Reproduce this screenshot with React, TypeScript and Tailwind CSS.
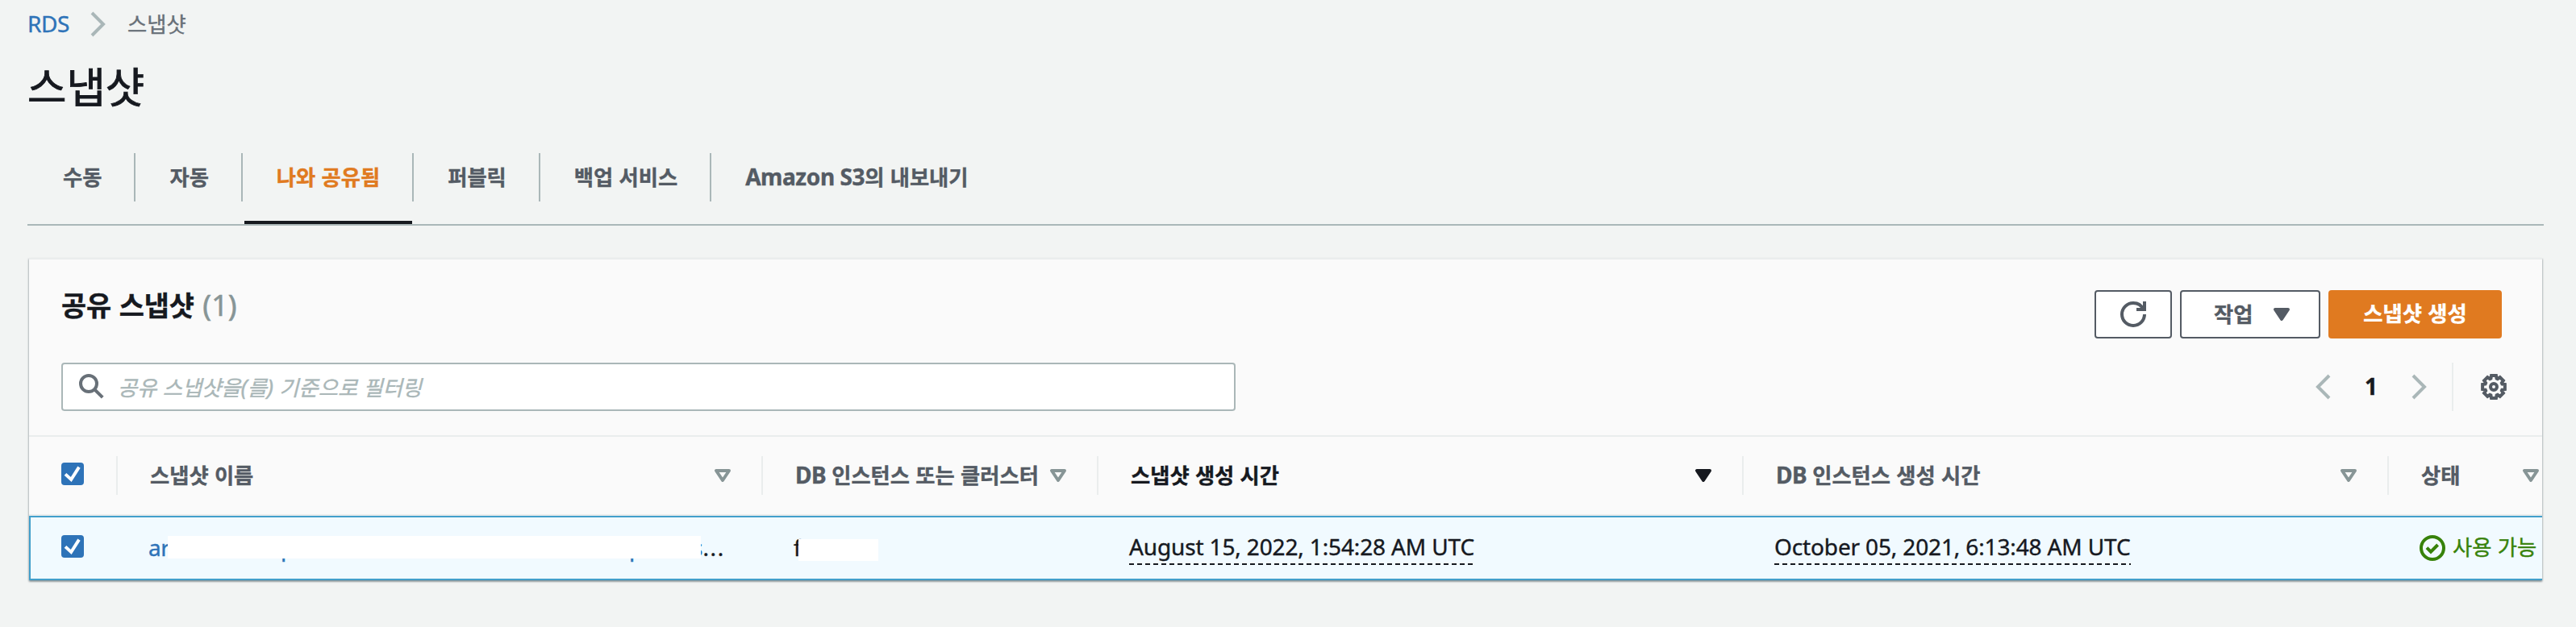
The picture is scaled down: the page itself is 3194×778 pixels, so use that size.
import React from 'react';

// Latin glyphs render at the inherited size, Hangul runs are slightly smaller to keep both optically even
const Mixed: React.FC<{ text: string }> = ({ text }) => (
  <>
    {text.split(/([가-힣]+)/).filter(Boolean).map((part, i) => (
      /[가-힣]/.test(part)
        ? <span key={i} className="text-[0.94em]">{part}</span>
        : <span key={i} className={/[A-Z]/.test(part) ? 'tracking-[-0.4px]' : ''}>{part}</span>
    ))}
  </>
);

const Chevron: React.FC<{ left?: boolean }> = ({ left }) => (
  <svg viewBox="0 0 16 16" className="size-8 shrink-0" fill="none" stroke="#aab7b8" strokeWidth="2">
    <path d={left ? 'M12 1L5 8l7 7' : 'M4 1l7 7-7 7'} />
  </svg>
);

const Caret: React.FC<{ filled?: boolean; className: string }> = ({ filled, className }) => (
  <svg viewBox="0 0 16 16" className={`size-8 shrink-0 ${className}`} fill={filled ? 'currentColor' : 'none'} stroke="currentColor" strokeWidth="2" strokeLinejoin="round">
    <path d="M4 5h8l-4 6-4-6z" />
  </svg>
);

const Checkbox: React.FC = () => (
  <div className="size-7 rounded-[4px] bg-[#2e73b8] shrink-0">
    <svg viewBox="0 0 14 14" className="size-7" fill="none" stroke="#fff" strokeWidth="2">
      <path d="M2.5 7.2l3.600 3.300L11 2.800" />
    </svg>
  </div>
);

// Eight teeth, each one described by its two outer and two inner corners
const gearPoints = Array.from({ length: 8 }).flatMap((_, k) => (
  [[-19, 5.5], [-12, 7.1], [12, 7.1], [19, 5.5]].map(([offset, r]) => {
    const a = ((k * 45 + offset) * Math.PI) / 180;
    return `${(8 + r * Math.cos(a)).toFixed(2)},${(8 + r * Math.sin(a)).toFixed(2)}`;
  })
)).join(' ');

const Gear: React.FC = () => (
  <svg viewBox="0 0 16 16" className="size-8 text-[#545b64]" fill="none" stroke="currentColor" strokeWidth="2">
    <polygon points={gearPoints} />
    <circle cx="8" cy="8" r="2" />
  </svg>
);

const Timestamp: React.FC<{ text: string }> = ({ text }) => (
  <div className="w-fit tracking-[-0.14px]">
    {text}
    <div className="mt-px h-[2px] bg-[repeating-linear-gradient(90deg,#16191f_0_6px,transparent_6px_10px)]" />
  </div>
);

const tabs = [
  { label: '수동' },
  { label: '자동' },
  { label: '나와 공유됨', active: true },
  { label: '퍼블릭' },
  { label: '백업 서비스' },
  { label: 'Amazon S3의 내보내기' },
];

const columns = [
  { label: '스냅샷 이름' },
  { label: 'DB 인스턴스 또는 클러스터' },
  { label: '스냅샷 생성 시간', sorted: true },
  { label: 'DB 인스턴스 생성 시간' },
  { label: '상태' },
];

const grid = 'grid grid-cols-[110px_800px_416px_800px_800px_190px]';

const App: React.FC = () => {
  return (
    <div className="w-[3194px] h-[778px] overflow-hidden bg-[#f2f4f3] text-[#16191f] text-[28px] leading-[40px] whitespace-pre font-['Noto_Sans','Noto_Sans_CJK_KR',sans-serif] [-webkit-text-stroke:0.4px]">
      {/* Breadcrumb */}
      <nav className="flex items-center h-[60px] pl-[34px]">
        <a className="text-[#2e73b8] w-[72px] pb-[2px] tracking-[-0.4px]">RDS</a>
        <Chevron />
        <span className="text-[#687078] ml-[20px] pb-[2px]"><Mixed text="스냅샷" /></span>
      </nav>

      <h1 className="h-[80px] pl-[34px] mt-[6px] text-[56px] leading-[80px] [-webkit-text-stroke:0.9px]"><Mixed text="스냅샷" /></h1>

      {/* Tabs */}
      <div className="flex mt-[44px] ml-[34px] mr-[40px] pl-1 h-[90px] border-b-2 border-[#aab7b8] font-bold text-[#545b64]">
        {tabs.map((tab, i) => (
          <div key={tab.label} className="flex">
            <div className={`px-10 pt-[9px] border-b-4 ${tab.active ? 'text-[#e07a20] border-[#16191f]' : 'border-transparent'}`}>
              <Mixed text={tab.label} />
            </div>
            {i < tabs.length - 1 && <div className="w-[2px] h-[60px] mr-[2px] bg-[#aab7b8]" />}
          </div>
        ))}
      </div>

      {/* Snapshot list */}
      <div className="mt-[40px] ml-9 w-[3116px] h-[400px] shadow-[0_2px_2px_0_rgba(0,28,36,0.3),1px_1px_2px_0_rgba(0,28,36,0.15),-1px_1px_2px_0_rgba(0,28,36,0.15)]">
        <div className="h-[222px] bg-[#fafafa] border-y-2 border-[#eaeded] pl-10">
          <div className="flex justify-between h-[98px] pr-[50px]">
            <h2 className="pt-[33px] text-[36px] leading-[48px] font-bold">
              <Mixed text="공유 스냅샷" /><span className="ml-px font-normal text-[#879596] [-webkit-text-stroke:0.6px]"> (1)</span>
            </h2>
            <div className="flex gap-[10px] pt-[38px] font-bold text-[#545b64]">
              <button className="flex items-center justify-center w-[96px] h-[60px] bg-white border-2 border-[#545b64] rounded-[4px]">
                <svg viewBox="0 0 16 16" className="size-8" fill="none" stroke="currentColor" strokeWidth="2">
                  <path d="M10 5h5V0" />
                  <path d="M15 8a6.957 6.957 0 0 1-7 7 6.957 6.957 0 0 1-7-7 6.957 6.957 0 0 1 7-7 6.87 6.87 0 0 1 6.3 4" />
                </svg>
              </button>
              <button className="flex items-center w-[174px] h-[60px] pl-10 bg-white border-2 border-[#545b64] rounded-[4px]">
                <span className="pb-[2px]"><Mixed text="작업" /></span>
                <Caret filled className="ml-[20px]" />
              </button>
              <button className="flex items-center justify-center w-[215px] h-[60px] pb-[2px] bg-[#e07a20] text-white rounded-[4px]">
                <Mixed text="스냅샷 생성" />
              </button>
            </div>
          </div>

          <div className="flex justify-between mt-[30px] h-[60px] pr-[44px]">
            <div className="flex items-center w-[1456px] h-[60px] bg-white border-2 border-[#aab7b8] rounded-[4px] pl-5">
              <svg viewBox="0 0 16 16" className="size-8" fill="none" stroke="#687078" strokeWidth="2">
                <circle cx="6" cy="6" r="5" />
                <path d="M9.500 9.500l5.100 5.100" />
              </svg>
              <span className="ml-[16px] italic text-[#aab7b8]"><Mixed text="공유 스냅샷을(를) 기준으로 필터링" /></span>
            </div>
            <div className="flex items-center">
              <Chevron left />
              <span className="w-[88px] pb-[2px] text-center font-bold">1</span>
              <Chevron />
              <div className="w-[2px] h-[60px] ml-[24px] mr-[34px] bg-[#eaeded]" />
              <Gear />
            </div>
          </div>
        </div>

        {/* Header row */}
        <div className={`${grid} h-[98px] bg-[#fafafa] border-b-2 border-[#eaeded] font-bold text-[#545b64]`}>
          <div className="flex justify-between pl-10 pt-6">
            <div className="mt-2"><Checkbox /></div>
            <div className="w-[2px] h-12 bg-[#eaeded]" />
          </div>
          {columns.map((col, i) => (
            <div key={col.label} className="flex justify-between pl-10 pt-6">
              <span className={`pt-[3px] ${col.sorted ? 'text-[#16191f]' : ''}`}><Mixed text={col.label} /></span>
              <div className={i < columns.length - 1 ? 'flex' : 'flex -mr-[2px]'}>
                <Caret filled={col.sorted} className={col.sorted ? 'mt-2 text-[#16191f]' : 'mt-2 text-[#879596]'} />
                {i < columns.length - 1 && <div className="w-[2px] h-12 ml-8 bg-[#eaeded]" />}
              </div>
            </div>
          ))}
        </div>

        {/* Selected row */}
        <div className={`${grid} h-[80px] bg-[#f1faff] border-y-2 border-l-2 border-[#429fcb]`}>
          <div className="pl-[38px] pt-[22px]"><Checkbox /></div>
          <div className="relative pl-9 pt-[17px] flex">
            <span className="w-[140px] mr-6 text-[#2e73b8] tracking-[-0.5px]">ar</span>
            <span className="w-[17px] text-[#2e73b8]">p</span>
            <span className="w-[17px] ml-[415px] text-[#2e73b8]">p</span>
            <span className="ml-[61px] text-[#2e73b8]">s</span>
            <span className="tracking-[1.600px]">...</span>
            {/* redacted part of the name */}
            <div className="absolute left-[60px] top-[23px] w-[661px] h-7 bg-white" />
          </div>
          <div className="relative pl-9 pt-[17px] flex">
            <span>f</span>
            <div className="absolute left-[42px] top-[27px] w-[99px] h-[27px] bg-white" />
          </div>
          <div className="pl-9 pt-4">
            <Timestamp text="August 15, 2022, 1:54:28 AM UTC" />
          </div>
          <div className="pl-9 pt-4">
            <Timestamp text="October 05, 2021, 6:13:48 AM UTC" />
          </div>
          <div className="pl-9 pt-[17px] flex text-[#37820a]">
            <svg viewBox="0 0 16 16" className="size-8 mt-[5px] mr-[9px] shrink-0" fill="none" stroke="currentColor" strokeWidth="2">
              <circle cx="8" cy="8" r="7" />
              <path d="M4.500 7.800l2.500 2.500 4.300-4.300" />
            </svg>
            <Mixed text="사용 가능" />
          </div>
        </div>
      </div>
    </div>
  );
};

export default App;
